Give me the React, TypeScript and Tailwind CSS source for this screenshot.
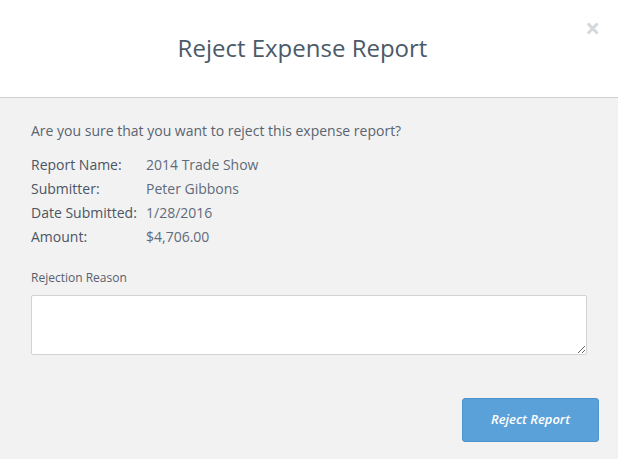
export default function App() {
  return (
    <div
      className="w-[618px] h-[459px] bg-[#f2f2f2] flex flex-col"
      style={{ fontFamily: '"Open Sans", sans-serif' }}
    >
      <div className="relative h-[98px] bg-white border-b border-[#cfcfcf] flex items-center justify-center pr-[13px]">
        <h1 className="text-[24px] text-[#4b5a69] leading-none mt-[-2px]">Reject Expense Report</h1>
        <button className="absolute right-[18px] top-[15px] text-[#d4d7db] text-[26px] leading-none font-bold">
          ×
        </button>
      </div>
      <div className="px-[31px] pt-[23px] flex flex-col">
        <p className="text-[14px] text-[#5a6470] leading-[20px]">
          Are you sure that you want to reject this expense report?
        </p>
        <div className="mt-[12px] grid grid-cols-[115px_1fr] text-[14px] leading-[24px]">
          <span className="text-[#4b5563]">Report Name:</span>
          <span className="text-[#5f6b7a]">2014 Trade Show</span>
          <span className="text-[#4b5563]">Submitter:</span>
          <span className="text-[#5f6b7a]">Peter Gibbons</span>
          <span className="text-[#4b5563]">Date Submitted:</span>
          <span className="text-[#5f6b7a]">1/28/2016</span>
          <span className="text-[#4b5563]">Amount:</span>
          <span className="text-[#5f6b7a]">$4,706.00</span>
        </div>
        <label className="mt-[21px] text-[12px] text-[#56606c] leading-[16px]">Rejection Reason</label>
        <textarea className="mt-[9px] w-[556px] h-[60px] bg-white border border-[#d2d2d2] rounded-[2px] outline-none" />
        <div className="flex justify-end mt-[43px]">
          <button className="mr-[-12px] w-[137px] h-[44px] rounded-[3px] bg-[#5ba1d9] border border-[#4f93cc] text-white text-[13px] font-semibold italic">
            Reject Report
          </button>
        </div>
      </div>
    </div>
  );
}
